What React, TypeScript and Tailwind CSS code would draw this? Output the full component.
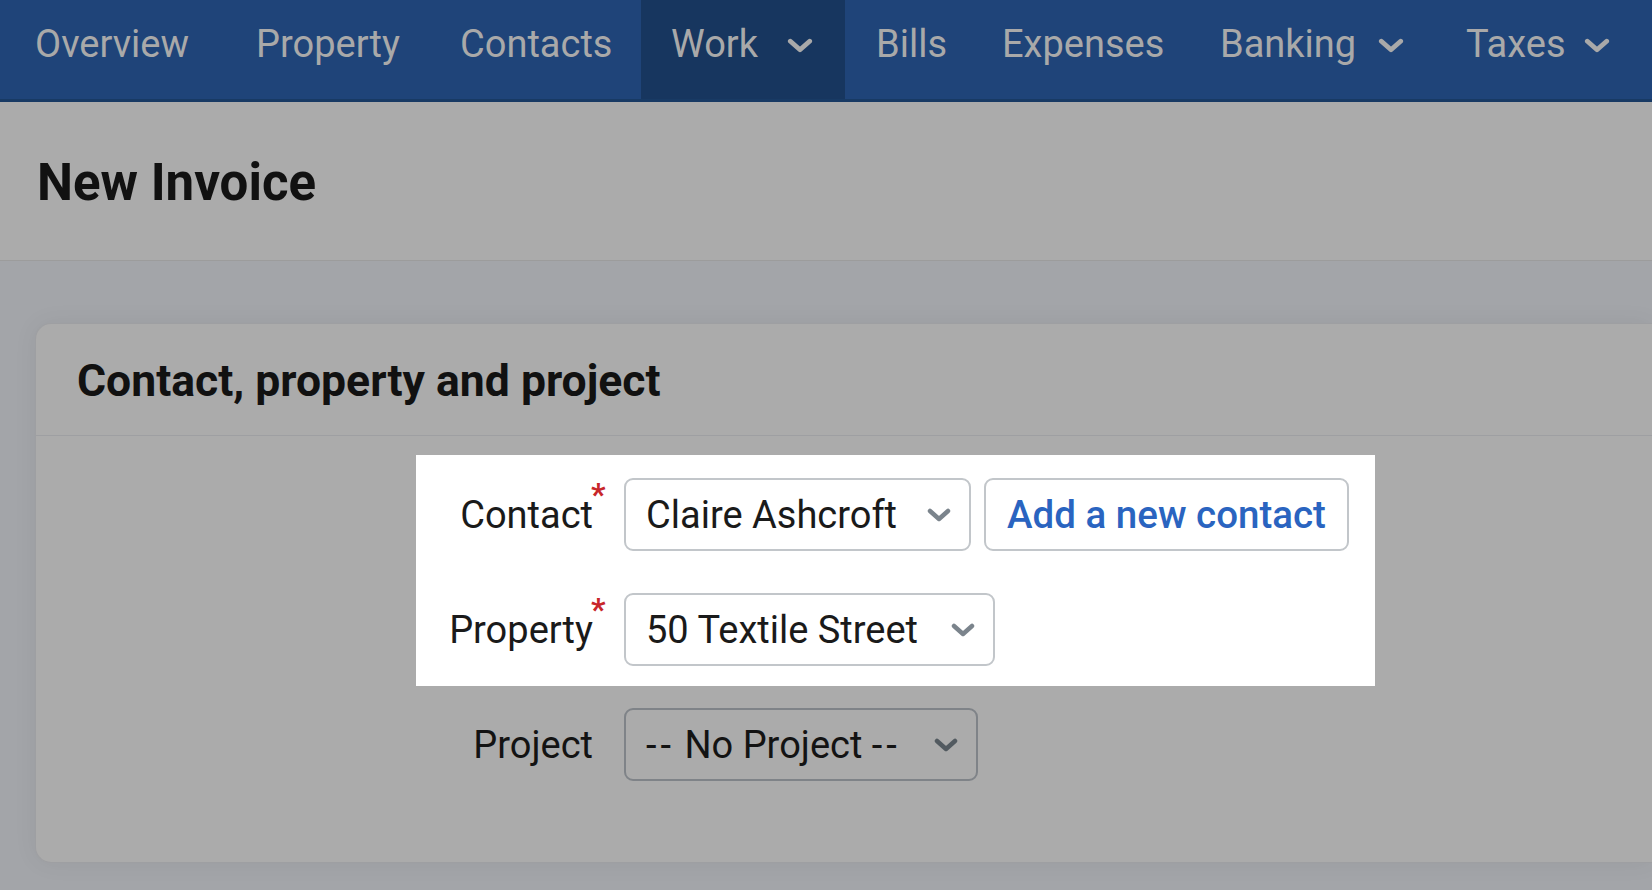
import React from 'react';

const navItems = [
  { label: 'Overview', w: 'w-[159px]' },
  { label: 'Property', w: 'w-[142px]' },
  { label: 'Contacts', w: 'w-[150px]' },
  { label: 'Work', w: 'w-[89px]', menu: true, active: true },
  { label: 'Bills', w: 'w-[64px]' },
  { label: 'Expenses', w: 'w-[156px]' },
  { label: 'Banking', w: 'w-[131px]', menu: true },
  { label: 'Taxes', w: 'w-[91px]', menu: true },
];

function Chevron({ className }: { className?: string }) {
  return (
    <svg viewBox="0 0 24 14" className={className} fill="none">
      <polyline
        points="3,3 12,11 21,3"
        stroke="currentColor"
        strokeWidth="4.5"
        strokeLinecap="round"
        strokeLinejoin="round"
      />
    </svg>
  );
}

function Label({ text, required }: { text: string; required?: boolean }) {
  return (
    <div className="w-[177px] shrink-0 text-right">
      <span className="relative text-[38px] leading-[46px]">
        {text}
        {required && (
          <span className="absolute left-[calc(100%-2px)] top-[-15px] text-[32px] font-bold leading-[32px] text-[#c8262a]">
            *
          </span>
        )}
      </span>
    </div>
  );
}

function Select({ children, width, dim }: { children: React.ReactNode; width: string; dim?: boolean }) {
  return (
    <div
      className={`ml-[31px] flex h-[73px] items-center justify-between rounded-[9px] border-2 pl-[20px] pr-[18px] ${width} ${
        dim ? 'border-[#7f8388] text-[#131313]' : 'border-[#c2c6ca] bg-white text-[#1a1a1a]'
      }`}
    >
      <span className="text-[38px] leading-[46px]">{children}</span>
      <Chevron className={`h-[14px] w-[24px] ${dim ? 'text-[#525a60]' : 'text-[#7b848c]'}`} />
    </div>
  );
}

export default function App() {
  return (
    <div className="min-h-screen w-full overflow-hidden bg-[#a3a5a9] font-['Roboto',sans-serif]">
      {/* Top navigation */}
      <nav className="flex h-[102px] border-b-[3px] border-[#183a64] bg-[#1f4479] pl-[4px]">
        {navItems.map((item) => (
          <a
            key={item.label}
            className={`flex h-full shrink-0 items-start gap-[27px] pt-[20px] text-[38px] leading-[48px] text-[#a9a9a9] ${
              item.active ? 'bg-[#17365f] pl-[30px] pr-[32px]' : 'px-[31px]'
            }`}
          >
            <span className={`whitespace-nowrap ${item.w}`}>{item.label}</span>
            {item.menu && <Chevron className="mt-[18px] h-[15px] w-[26px] shrink-0" />}
          </a>
        ))}
      </nav>

      {/* Page header */}
      <div className="flex h-[159px] items-center border-b border-[#9c9c9c] bg-[#ababab] pl-[37px] pt-[4px]">
        <h1 className="text-[51px] font-bold leading-[60px] text-[#111111]">New Invoice</h1>
      </div>

      {/* Card */}
      <div className="pl-[35px] pt-[62px]">
        <div className="rounded-l-[16px] border border-r-0 border-[#9e9fa2] bg-[#ababab] shadow-[0_0_24px_rgba(0,0,0,0.06)]">
          <div className="flex h-[112px] items-center border-b border-[#9e9fa2] pl-[41px] pt-[2px]">
            <h2 className="text-[44.5px] font-bold leading-[54px] text-[#111111]">Contact, property and project</h2>
          </div>

          <div className="pb-[81px] pt-[19px]">
            {/* Highlighted fields */}
            <div className="ml-[380px] w-[959px] bg-white pb-[20px] pt-[23px] text-[#1a1a1a]">
              <div className="flex items-center">
                <Label text="Contact" required />
                <Select width="w-[347px]">Claire Ashcroft</Select>
                <button className="ml-[13px] h-[73px] w-[365px] rounded-[9px] border-2 border-[#c2c6ca] bg-white text-[38.5px] font-medium leading-[46px] text-[#2a64c0]">
                  Add a new contact
                </button>
              </div>
              <div className="mt-[42px] flex items-center">
                <Label text="Property" required />
                <Select width="w-[371px]">50 Textile Street</Select>
              </div>
            </div>

            <div className="ml-[380px] mt-[22px] flex items-center text-[#131313]">
              <Label text="Project" />
              <Select width="w-[354px]" dim>
                <span className="tracking-[4px]">--</span> No Project <span className="tracking-[4px]">--</span>
              </Select>
            </div>
          </div>
        </div>
      </div>
    </div>
  );
}
